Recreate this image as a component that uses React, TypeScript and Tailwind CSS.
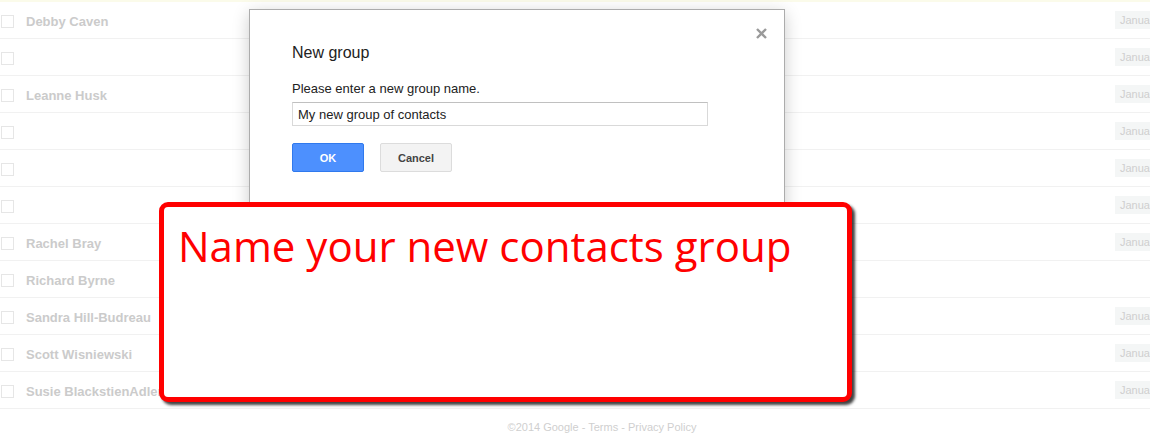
import React from "react";

interface Contact {
  name: string;
  date: boolean;
}

const contacts: Contact[] = [
  { name: "Debby Caven", date: true },
  { name: "", date: true },
  { name: "Leanne Husk", date: true },
  { name: "", date: true },
  { name: "", date: true },
  { name: "", date: true },
  { name: "Rachel Bray", date: true },
  { name: "Richard Byrne", date: false },
  { name: "Sandra Hill-Budreau", date: true },
  { name: "Scott Wisniewski", date: true },
  { name: "Susie BlackstienAdler", date: true },
];

const ContactRow: React.FC<{ contact: Contact }> = ({ contact }) => (
  <div className="flex h-[37px] items-center border-b border-[#f1f1f1] pl-px">
    <div className="mt-[3px] h-[13px] w-[13px] shrink-0 border border-[#e6e6e6] bg-white" />
    <div className="ml-3 mt-1 flex-1 whitespace-nowrap text-[13px] font-bold text-[#cbcbcb]">
      {contact.name}
    </div>
    <div className="w-[35px] shrink-0 overflow-hidden">
      {contact.date && (
        <div className="flex h-[18px] items-center whitespace-nowrap bg-[#f4f6f6] pl-[5px] text-[11px] text-[#cfcfcf]">
          Janua
        </div>
      )}
    </div>
  </div>
);

const NewGroupDialog: React.FC = () => (
  <div className="absolute left-[249px] top-[9px] h-[230px] w-[536px] border border-[#acacac] bg-white pl-[42px] pt-[33px] shadow-[0_4px_16px_rgba(0,0,0,0.2)]">
    <button className="absolute right-[15px] top-[15px] flex h-4 w-4 items-center justify-center text-[#9a9a9a]">
      <svg width="11" height="11" viewBox="0 0 11 11">
        <path d="M1 1L10 10M10 1L1 10" stroke="currentColor" strokeWidth="2.4" />
      </svg>
    </button>
    <div className="h-5 text-[16px] leading-5 text-[#222]">New group</div>
    <p className="mt-[18px] text-[13px] leading-4 text-[#222]">
      Please enter a new group name.
    </p>
    <input
      type="text"
      defaultValue="My new group of contacts"
      className="mt-[5px] block h-[24px] w-[416px] border border-[#d9d9d9] border-t-[#c0c0c0] px-[5px] text-[13px] text-[#222] outline-none"
    />
    <div className="mt-[17px] flex gap-4">
      <button className="h-[29px] w-[72px] rounded-[2px] border border-[#3079ed] bg-[#4d90fe] pt-px text-[11px] font-bold text-white">
        OK
      </button>
      <button className="h-[29px] w-[72px] rounded-[2px] border border-[#dcdcdc] bg-[#f3f3f3] pt-px text-[11px] font-bold text-[#444]">
        Cancel
      </button>
    </div>
  </div>
);

export default function App() {
  return (
    <div
      className="relative h-[434px] w-full overflow-hidden bg-white"
      style={{ fontFamily: '"Liberation Sans", Arial, sans-serif' }}
    >
      <div className="h-[2px] bg-[#fbfbea]" />
      {contacts.map((c, i) => (
        <ContactRow key={i} contact={c} />
      ))}
      <div className="pl-[54px] pt-[12px] text-center text-[11px] leading-[13px] text-[#cfcfcf]">
        ©2014 Google - Terms - Privacy Policy
      </div>

      <NewGroupDialog />

      <div className="absolute left-[159px] top-[202px] h-[200px] w-[693px] rounded-[9px] border-[5px] border-[#ff0000] bg-white pl-[14px] pt-[14px] shadow-[3px_3px_3px_rgba(0,0,0,0.75)]">
        <div
          className="whitespace-nowrap text-[42px] leading-[1.2] text-[#ff0000]"
          style={{ fontFamily: '"Open Sans", "Noto Sans", sans-serif' }}
        >
          Name your new contacts group
        </div>
      </div>
    </div>
  );
}
